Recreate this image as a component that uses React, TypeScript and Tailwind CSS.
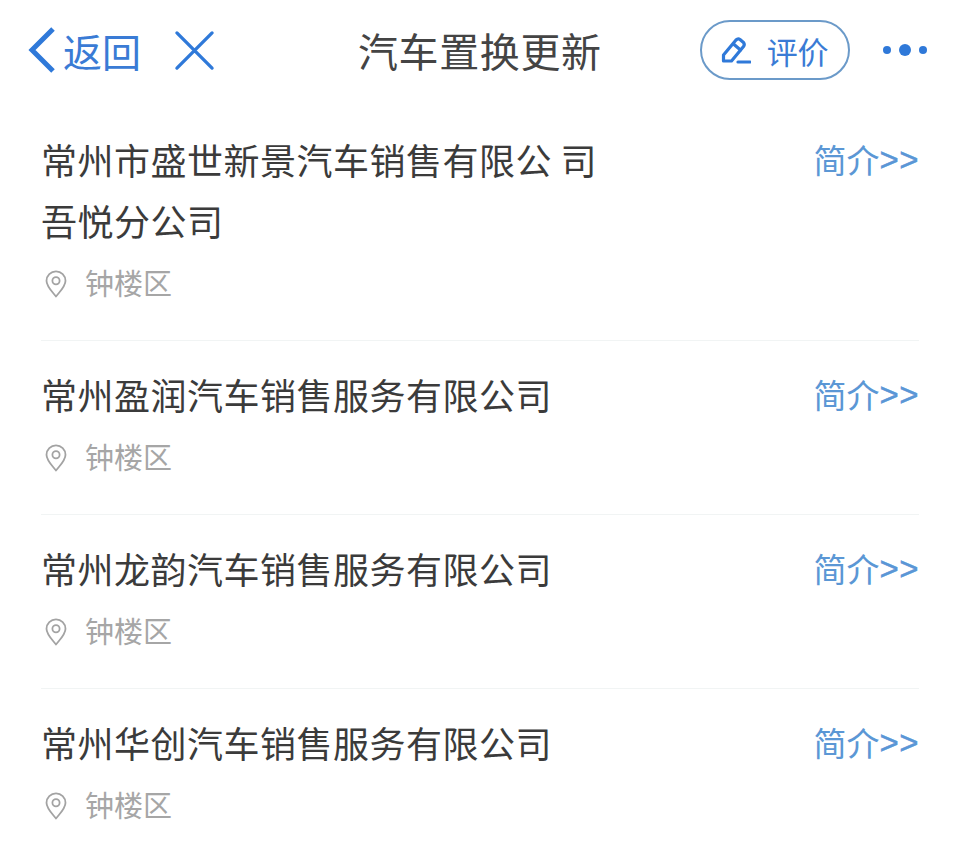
import React from 'react';

const FONT = "font-['Noto_Sans_CJK_SC','Noto_Sans',sans-serif]";

const companies = [
  {name: '常州市盛世新景汽车销售有限公 司', extra: '吾悦分公司'},
  {name: '常州盈润汽车销售服务有限公司'},
  {name: '常州龙韵汽车销售服务有限公司'},
  {name: '常州华创汽车销售服务有限公司'},
];

const PinIcon = () => (
  <svg className="mt-[4px]" width="22" height="28" viewBox="0 0 22 28" fill="none" stroke="#a3a3a3" strokeWidth="1.8">
    <path d="M11 26.5 C7 21.5 1.5 16.5 1.5 10.8 A9.5 9.5 0 0 1 20.5 10.8 C20.5 16.5 15 21.5 11 26.5 Z" strokeLinejoin="round" />
    <circle cx="11" cy="10.8" r="3.6" />
  </svg>
);

const PenIcon = () => (
  <svg width="30" height="30" viewBox="0 0 30 30" fill="none" stroke="#2f79d9" strokeWidth="3.2" strokeLinejoin="round" strokeLinecap="round">
    <path d="M2.5 20 L15 5 Q17 3 19 4.5 L22.5 7.5 Q24 9.5 22.5 11.5 L10.5 26 L2.5 26 Z" />
    <path d="M12.5 9 L19.5 15" />
    <path d="M17 27 H29" />
  </svg>
);

const Row = ({name, extra, last}: {name: string; extra?: string; last?: boolean}) => (
  <div className={`flex justify-between pt-[23px] ${last ? 'pb-0' : 'pb-[27px] border-b border-[#f1f4f4]'}`}>
    <div>
      <div className="text-[36px] leading-[61px] text-[#3b3b3b] tracking-[0.5px] whitespace-pre">{name}</div>
      {extra && <div className="text-[36px] leading-[61px] text-[#3b3b3b] tracking-[0.5px]">{extra}</div>}
      <div className="flex items-center gap-[18px] h-[62px] pl-[4px]">
        <PinIcon />
        <span className="text-[29px] text-[#a6a6a6] leading-[62px]">钟楼区</span>
      </div>
    </div>
    <div className="flex items-center h-[61px] text-[33px] text-[#5b97d5] leading-[61px]">
      简介<span className="text-[33px] tracking-[0.5px] font-['Liberation_Sans',sans-serif] [-webkit-text-stroke:0.4px_#4f8fd8]">&gt;&gt;</span>
    </div>
  </div>
);

export default function App() {
  return (
    <div className={`w-[960px] h-[851px] overflow-hidden bg-white ${FONT}`}>
      <header className="flex items-center h-[106px] pb-[6px] pl-[28px]">
        <svg width="28" height="46" viewBox="0 0 28 46" fill="none" stroke="#2f79d9" strokeWidth="5">
          <path d="M25 2 L4 23 L25 44" />
        </svg>
        <span className="ml-[7px] text-[39px] text-[#3a7bd5] leading-none">返回</span>
        <svg className="ml-[33px]" width="41" height="41" viewBox="0 0 42 42" fill="none" stroke="#2f79d9" strokeWidth="3.4" strokeLinecap="round">
          <path d="M3 3 L39 39 M39 3 L3 39" />
        </svg>
        <span className="ml-[143px] text-[40px] text-[#444444] leading-none tracking-[0.6px] whitespace-nowrap">汽车置换更新</span>
        <div className="ml-[98px] flex items-center justify-center gap-[16px] w-[150px] h-[60px] rounded-full border-2 border-[#6b9ac9] text-[31px] text-[#3a7bd5]">
          <PenIcon />
          <span className="leading-none">评价</span>
        </div>
        <div className="ml-[33px] flex items-center gap-[8px]">
          <span className="w-[8px] h-[8px] rounded-full bg-[#2f79d9]" />
          <span className="w-[12px] h-[12px] rounded-full bg-[#2f79d9]" />
          <span className="w-[8px] h-[8px] rounded-full bg-[#2f79d9]" />
        </div>
      </header>
      <main className="ml-[41px] mr-[41px]">
        {companies.map((c, i) => (
          <Row key={i} name={c.name} extra={c.extra} last={i === companies.length - 1} />
        ))}
      </main>
    </div>
  );
}
